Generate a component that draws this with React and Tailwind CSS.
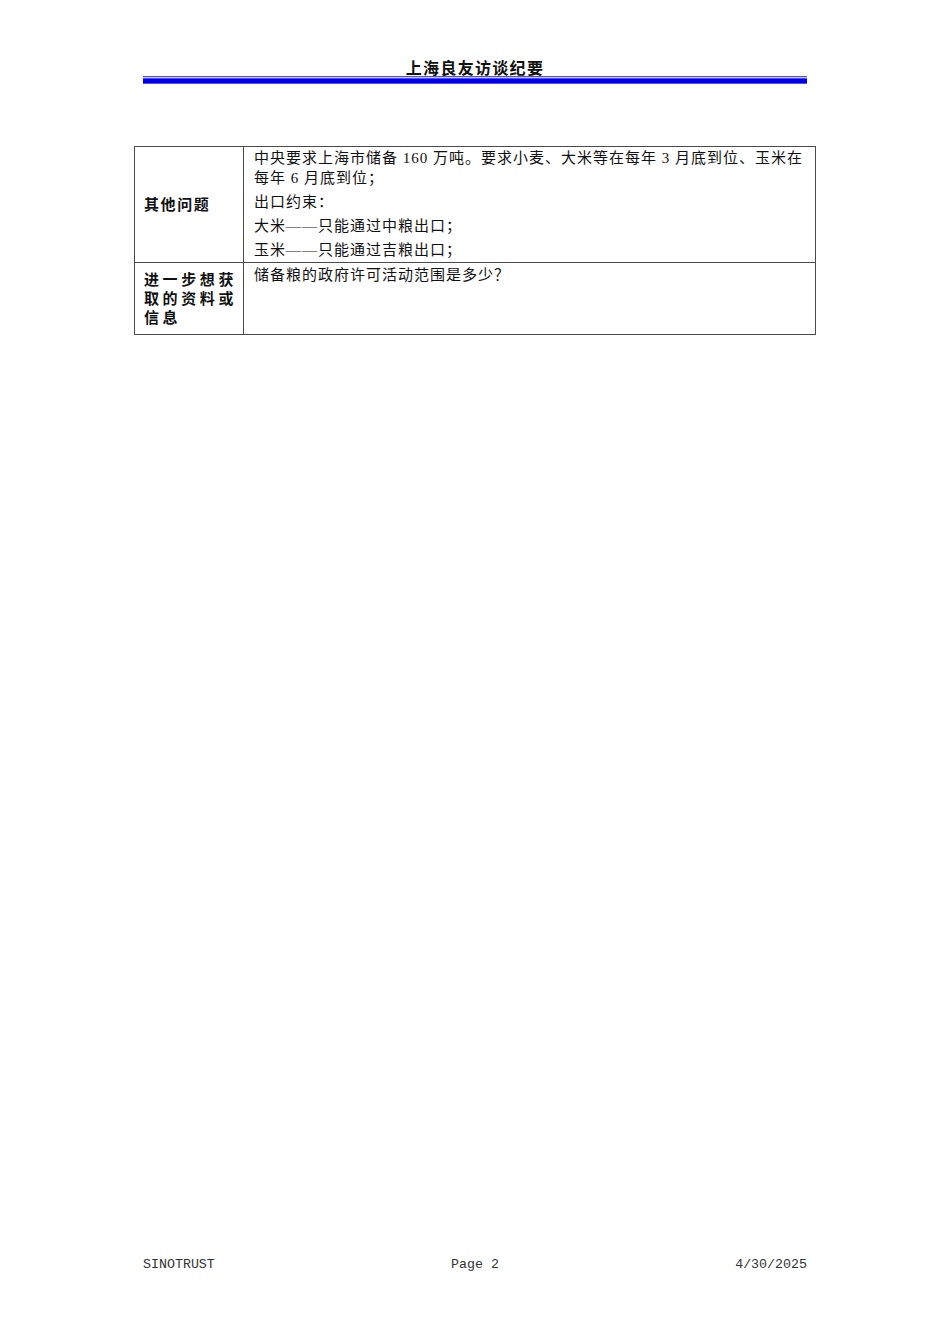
import React from "react";

const serif = { fontFamily: '"Liberation Serif", "Noto Sans CJK SC", serif' };
const sans = { fontFamily: '"Liberation Sans", "Noto Sans CJK SC", sans-serif' };
const mono = { fontFamily: '"Liberation Mono", "Noto Sans CJK SC", monospace' };

export default function App() {
  return (
    <div className="w-[950px] h-[1344px] bg-white flex flex-col">
      {/* Header */}
      <div className="ml-[143px] w-[664px] pt-[62px]">
        <div
          className="text-center text-[16px] leading-[14px] font-bold tracking-[1.3px] text-[#111]"
          style={sans}
        >
          上海良友访谈纪要
        </div>
        <div className="h-[1px] bg-[#4d4dff]" />
        <div className="h-[1px] bg-[#c8c8ff]" />
        <div className="h-[6px] bg-[#0000e6] border-y border-[#5050ff]" />
      </div>

      {/* Table */}
      <div className="ml-[134px] mt-[62px] w-[682px] border border-[#4a4a4a] text-[#111]">
        <div className="flex">
          <div
            className="w-[109px] shrink-0 border-r border-[#4a4a4a] pl-[9px] flex items-center text-[15px] leading-[19px] font-bold tracking-[1.6px]"
            style={sans}
          >
            其他问题
          </div>
          <div
            className="flex-1 pl-[10px] pr-[6px] pt-[1px] pb-[2px] text-[15px] leading-[20px] tracking-[1px] flex flex-col gap-[4px]"
            style={serif}
          >
            <p className="h-[40px]">
              中央要求上海市储备 160 万吨。要求小麦、大米等在每年 3 月底到位、玉米在
              <br />
              每年 6 月底到位；
            </p>
            <p className="h-[20px]">出口约束：</p>
            <p className="h-[20px]">大米——只能通过中粮出口；</p>
            <p className="h-[20px]">玉米——只能通过吉粮出口；</p>
          </div>
        </div>
        <div className="flex border-t border-[#4a4a4a] h-[72px]">
          <div
            className="w-[109px] shrink-0 border-r border-[#4a4a4a] pl-[9px] flex flex-col justify-center text-[15px] leading-[19px] font-bold tracking-[3.6px]"
            style={sans}
          >
            <span>进一步想获</span>
            <span>取的资料或</span>
            <span>信息</span>
          </div>
          <div
            className="flex-1 pl-[10px] pt-[2px] text-[15px] leading-[20px] tracking-[1px]"
            style={serif}
          >
            储备粮的政府许可活动范围是多少？
          </div>
        </div>
      </div>

      {/* Footer */}
      <div
        className="mt-auto mb-[71px] ml-[143px] w-[664px] flex justify-between items-center text-[13.3px] leading-[16px] text-[#333]"
        style={mono}
      >
        <span>SINOTRUST</span>
        <span>Page 2</span>
        <span>4/30/2025</span>
      </div>
    </div>
  );
}
